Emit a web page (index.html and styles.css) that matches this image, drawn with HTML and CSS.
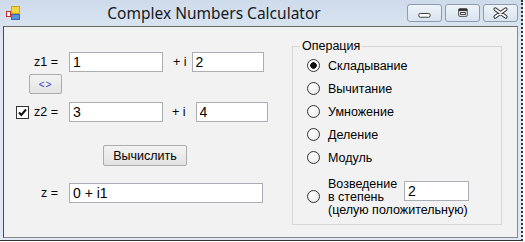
FILE: index.html
```html
<!DOCTYPE html>
<html lang="ru">
<head>
    <meta charset="UTF-8">
    <title>Complex Numbers Calculator</title>
    <link rel="stylesheet" href="styles.css">
</head>
<body>

    <div class="window">
        <div class="titlebar">
            <svg class="app-icon" width="16" height="16" viewBox="0 0 16 16">
                <rect x="1.5" y="6.5" width="4" height="5" fill="#fff" stroke="#d02828"/>
                <rect x="6.5" y="1.5" width="8" height="7" fill="#f6d641" stroke="#c9a21f"/>
                <rect x="6.5" y="9.5" width="8" height="5" fill="#5b90da" stroke="#3a6ab2"/>
            </svg>
            <div class="title">Complex Numbers Calculator</div>
            <div class="caption-buttons">
                <div class="cap-btn">
                    <svg width="35" height="18" viewBox="0 0 35 18">
                        <rect x="11.5" y="9.5" width="12" height="4" rx="1.5" fill="#fff" stroke="#333"/>
                    </svg>
                </div>
                <div class="cap-btn">
                    <svg width="35" height="18" viewBox="0 0 35 18">
                        <rect x="13.5" y="4.5" width="9" height="8" rx="1" fill="#fff" stroke="#333"/>
                        <rect x="13.5" y="4.5" width="9" height="2.5" fill="#333"/>
                        <rect x="15.5" y="8.5" width="5" height="2" fill="none" stroke="#333"/>
                    </svg>
                </div>
                <div class="cap-btn">
                    <svg width="35" height="18" viewBox="0 0 35 18">
                        <path d="M12 5 L23 13 M23 5 L12 13" stroke="#333" stroke-width="4" stroke-linecap="round"/>
                        <path d="M12 5 L23 13 M23 5 L12 13" stroke="#fff" stroke-width="1.8" stroke-linecap="round"/>
                    </svg>
                </div>
            </div>
        </div>

        <div class="client">
            <div class="calc">
                <div class="row">
                    <span class="lbl">z1 =</span>
                    <input class="num" type="text" value="1">
                    <span class="plus plus-1">+ i</span>
                    <input class="num num-im" type="text" value="2">
                </div>
                <div class="row row-swap">
                    <button class="btn btn-swap">&lt;&gt;</button>
                </div>
                <div class="row row-z2">
                    <span class="check">
                        <svg width="13" height="13" viewBox="0 0 13 13">
                            <rect x="0.5" y="0.5" width="12" height="12" fill="#fff" stroke="#333"/>
                            <path d="M3 6.5 L5.3 9 L10 3.5" fill="none" stroke="#111" stroke-width="2"/>
                        </svg>
                    </span>
                    <span class="lbl lbl-z2">z2 =</span>
                    <input class="num" type="text" value="3">
                    <span class="plus plus-2">+ i</span>
                    <input class="num num-im" type="text" value="4">
                </div>
                <div class="row row-calc">
                    <button class="btn btn-calc">Вычислить</button>
                </div>
                <div class="row row-result">
                    <span class="lbl">z =</span>
                    <input class="num num-result" type="text" value="0 + i1">
                </div>
            </div>

            <fieldset class="ops">
                <legend>Операция</legend>
                <label class="op"><input type="radio" name="op" checked> Складывание</label>
                <label class="op"><input type="radio" name="op"> Вычитание</label>
                <label class="op"><input type="radio" name="op"> Умножение</label>
                <label class="op"><input type="radio" name="op"> Деление</label>
                <label class="op"><input type="radio" name="op"> Модуль</label>
                <div class="op op-power">
                    <input type="radio" name="op">
                    <div class="power-text">
                        <span class="power-name">Возведение<br>в степень</span>
                        <input class="num num-power" type="text" value="2">
                        <span class="power-note">(целую положительную)</span>
                    </div>
                </div>
            </fieldset>
        </div>
    </div>

</body>
</html>
```

FILE: styles.css
```css
* {
    box-sizing: border-box;
}

body {
    margin: 0;
    padding: 0;
    background: #fff;
    font-family: "Liberation Sans", Arial, sans-serif;
    font-size: 12.5px;
    color: #000;
}

.window {
    width: 523px;
    height: 241px;
    display: flex;
    flex-direction: column;
    background: linear-gradient(#cedbeb, #dfe8f3 40px, #dfe8f3);
    border-right: 2px dotted #333;
    border-bottom: 1px solid #333;
}

.titlebar {
    height: 26px;
    display: flex;
    align-items: center;
    padding: 0 3px 0 5px;
}

.title {
    flex: 1;
    text-align: center;
    font-family: "Noto Sans", sans-serif;
    font-size: 15.5px;
    color: #141a26;
    padding-bottom: 1px;
}

.caption-buttons {
    display: flex;
    gap: 3px;
    margin-bottom: 1px;
}

.cap-btn {
    width: 35px;
    height: 18px;
    border: 1px solid #8d9bb0;
    border-radius: 3px;
    background: linear-gradient(#eef3f9, #d9e3ef);
    display: flex;
    align-items: center;
    justify-content: center;
}

.cap-btn svg {
    display: block;
}

.client {
    flex: 1;
    display: flex;
    align-items: flex-start;
    margin: 0 3px 2px 3px;
    background: #f2f2f2;
    border: 1px solid #8a8a8a;
    border-left-color: #4a4a4a;
    border-top-color: #6a6a6a;
}

/* left part: inputs */
.calc {
    width: 288px;
    padding-top: 25px;
    display: flex;
    flex-direction: column;
}

.row {
    display: flex;
    align-items: center;
    height: 20px;
}

.lbl {
    width: 54px;
    text-align: right;
    margin-right: 11px;
}

.num {
    width: 94px;
    height: 20px;
    margin: 0;
    border: 1px solid #abadb3;
    background: #fff;
    font-family: "Liberation Sans", Arial, sans-serif;
    font-size: 14px;
    padding: 0 3px;
    color: #000;
    outline: none;
}

.num-im {
    width: 72px;
}

.plus-1 {
    margin: 0 5px 0 10px;
}

.plus-2 {
    margin: 0 10px 0 9px;
}

.row-swap {
    margin-top: 2px;
}

.btn {
    margin: 0;
    padding: 0;
    height: 20px;
    border: 1px solid #acacac;
    border-radius: 2px;
    background: linear-gradient(#f3f3f3, #e3e3e3);
    font-family: "Liberation Sans", Arial, sans-serif;
    font-size: 12.5px;
    color: #000;
}

.btn-swap {
    width: 33px;
    margin-left: 25px;
    font-size: 10px;
    color: #3448c4;
    letter-spacing: 1px;
}

.row-z2 {
    margin-top: 8px;
}

.check {
    margin-left: 12px;
    width: 13px;
    height: 13px;
}

.check svg {
    display: block;
}

.lbl-z2 {
    width: 29px;
}

.row-calc {
    margin-top: 23px;
    height: 21px;
}

.btn-calc {
    width: 84px;
    height: 21px;
    margin-left: 99px;
}

.row-result {
    margin-top: 17px;
}

.num-result {
    width: 194px;
}

/* right part: operation group */
.ops {
    width: 210px;
    height: 186px;
    margin: 12px 0 0 0;
    padding: 0;
    border: 1px solid #d6d6d6;
    display: flex;
    flex-direction: column;
}

.ops legend {
    margin-left: 7px;
    padding: 0 2px;
    line-height: 15px;
}

.op {
    display: flex;
    align-items: center;
    height: 23px;
    padding-left: 14px;
}

.op input[type="radio"] {
    appearance: none;
    -webkit-appearance: none;
    width: 13px;
    height: 13px;
    margin: 0 8px 0 0;
    border: 1px solid #333;
    border-radius: 50%;
    background: radial-gradient(circle at 40% 35%, #fff, #e6e6e6);
    flex-shrink: 0;
}

.op input[type="radio"]:checked {
    background: radial-gradient(circle, #111 0 3px, #fff 3.5px);
}

.op-power {
    height: 40px;
    margin-top: 7px;
}

.power-text {
    display: grid;
    grid-template-columns: 76px 65px;
    line-height: 13px;
    padding-top: 2px;
}

.power-name {
    grid-row: 1;
    grid-column: 1;
}

.num-power {
    grid-row: 1;
    grid-column: 2;
    width: 65px;
    align-self: center;
}

.power-note {
    grid-row: 2;
    grid-column: 1 / 3;
}
```
